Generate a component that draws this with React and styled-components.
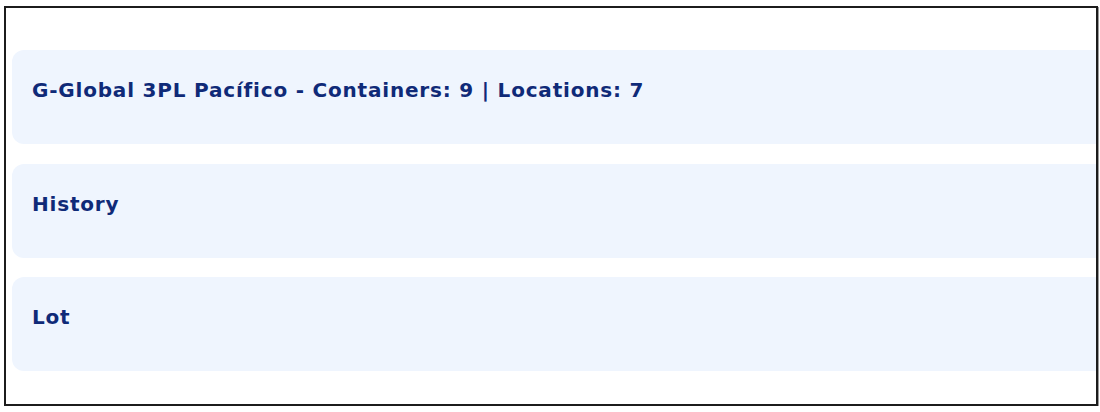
import React from 'react'
import styled, { createGlobalStyle } from 'styled-components'

const GlobalStyle = createGlobalStyle`
  body {
    margin: 0;
    background: #ffffff;
    font-family: "DejaVu Sans", "Noto Sans", sans-serif;
  }
`

const sections = [
  { id: 'warehouse', title: 'G-Global 3PL Pacífico - Containers: 9 | Locations: 7' },
  { id: 'history', title: 'History' },
  { id: 'lot', title: 'Lot' },
]

const App = () => (
  <>
    <GlobalStyle />
    <Frame>
      <SectionList>
        {sections.map(section => (
          <Section key={section.id}>
            <SectionTitle>{section.title}</SectionTitle>
          </Section>
        ))}
      </SectionList>
    </Frame>
  </>
)

const Frame = styled.div`
  box-sizing: border-box;
  margin: 6px 0 0 4px;
  width: 1094px;
  height: 400px;
  border: 2px solid #1c1c1c;
  box-shadow: 1px 1px 0 #9a9a9a;
  overflow: hidden;
  padding: 42px 0 0 6px;
`

const SectionList = styled.div`
  display: flex;
  flex-direction: column;
  gap: 19.5px;
  width: 1110px;
`

const Section = styled.div`
  box-sizing: border-box;
  height: 94px;
  padding: 24px 20px 0;
  background: #eff5fe;
  border-radius: 12px;
`

const SectionTitle = styled.h3`
  margin: 0;
  font-size: 20px;
  line-height: 32px;
  font-weight: 700;
  letter-spacing: 0.8px;
  color: #0f2a78;
`

export default App
